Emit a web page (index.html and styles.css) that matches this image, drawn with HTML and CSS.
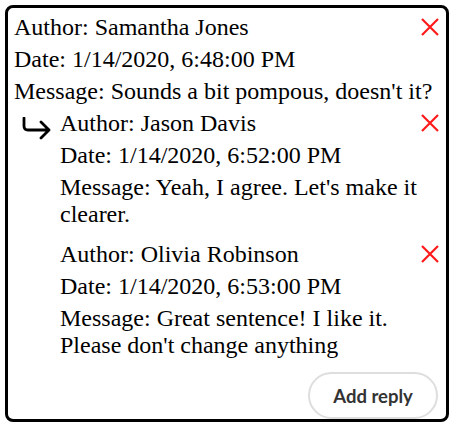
FILE: index.html
```html
<!DOCTYPE html>
<html>
<head>
<meta charset="utf-8">
<link rel="stylesheet" href="styles.css">
</head>
<body>
<div class="card">
  <div class="comment">
    <div class="field">Author: Samantha Jones</div>
    <div class="field">Date: 1/14/2020, 6:48:00 PM</div>
    <div class="field">Message: Sounds a bit pompous, doesn't it?</div>
    <button class="del" aria-label="Delete"><svg width="20" height="20" viewBox="0 0 20 20"><path d="M2 2L18 18M18 2L2 18" stroke="#ff1a1a" stroke-width="2.2" fill="none"/></svg></button>
  </div>
  <div class="replies">
    <div class="reply">
      <svg class="arrow" width="30" height="24" viewBox="0 0 30 24"><path d="M2 1V9Q2 13 6 13H27M19 5L27 13L19 21" stroke="#000" stroke-width="2.8" fill="none" stroke-linecap="round" stroke-linejoin="round"/></svg>
      <div class="comment sub">
        <div class="field">Author: Jason Davis</div>
        <div class="field">Date: 1/14/2020, 6:52:00 PM</div>
        <div class="field">Message: Yeah, I agree. Let's make it clearer.</div>
        <button class="del" aria-label="Delete"><svg width="20" height="20" viewBox="0 0 20 20"><path d="M2 2L18 18M18 2L2 18" stroke="#ff1a1a" stroke-width="2.2" fill="none"/></svg></button>
      </div>
    </div>
    <div class="reply">
      <div class="comment sub">
        <div class="field">Author: Olivia Robinson</div>
        <div class="field">Date: 1/14/2020, 6:53:00 PM</div>
        <div class="field">Message: Great sentence! I like it. Please don't change anything</div>
        <button class="del" aria-label="Delete"><svg width="20" height="20" viewBox="0 0 20 20"><path d="M2 2L18 18M18 2L2 18" stroke="#ff1a1a" stroke-width="2.2" fill="none"/></svg></button>
      </div>
    </div>
  </div>
  <div class="actions">
    <button class="add">Add reply</button>
  </div>
</div>
</body>
</html>
```

FILE: styles.css
```css
html, body {
  margin: 0;
  background: #fff;
}
body {
  padding: 5px;
}
.card {
  width: 444px;
  box-sizing: border-box;
  border: 3px solid #000;
  border-radius: 8px;
  padding: 6px 6px 0 6px;
  font-family: "Liberation Serif", "Times New Roman", serif;
  font-size: 24px;
  line-height: 27px;
  color: #000;
}
.comment {
  position: relative;
}
.comment.sub {
  padding-right: 19px;
}
.field {
  margin-bottom: 5px;
}
.del {
  position: absolute;
  top: 3px;
  right: 0;
  border: 0;
  background: none;
  padding: 0;
  width: 20px;
  height: 20px;
  display: flex;
}
.replies {
  padding-left: 8px;
}
.reply {
  position: relative;
  padding-left: 38px;
  margin-bottom: 13px;
}
.arrow {
  position: absolute;
  left: 0;
  top: 7px;
}
.actions {
  display: flex;
  justify-content: flex-end;
  margin-top: 5px;
}
.add {
  width: 130px;
  height: 47px;
  border: 2px solid #dedede;
  border-radius: 24px;
  background: #fff;
  font-family: Lato, "Open Sans", sans-serif;
  font-weight: 700;
  font-size: 18.5px;
  color: #333;
  margin-right: 2px;
}
```
